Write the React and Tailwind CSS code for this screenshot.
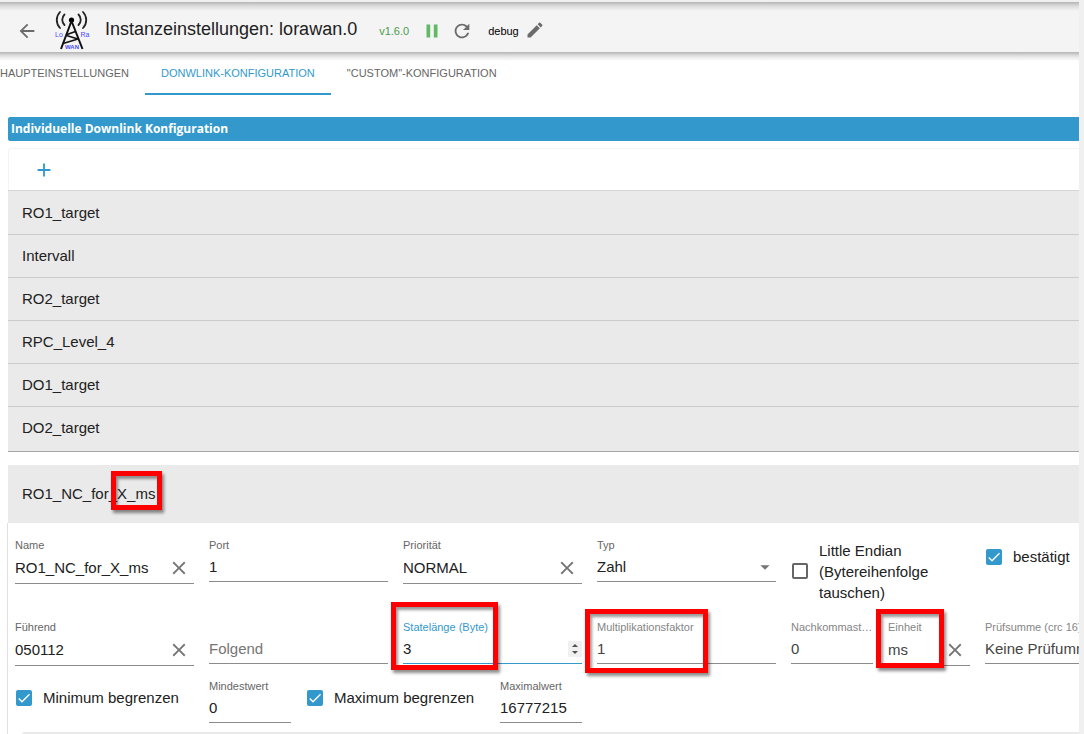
import React from "react";
import {
  MdAdd,
  MdArrowBack,
  MdArrowDropDown,
  MdCheck,
  MdClose,
  MdEdit,
  MdPause,
  MdRefresh,
} from "react-icons/md";

const entries = [
  "RO1_target",
  "Intervall",
  "RO2_target",
  "RPC_Level_4",
  "DO1_target",
  "DO2_target",
];

const tabs = [
  { name: "HAUPTEINSTELLUNGEN" },
  { name: "DONWLINK-KONFIGURATION", active: true },
  { name: "\"CUSTOM\"-KONFIGURATION" },
];

const Logo = () => (
  <svg viewBox="0 0 36 42" className="w-9 h-[42px] shrink-0" aria-label="LoRaWAN">
    <g fill="none" stroke="#222" strokeWidth="1.8" strokeLinecap="round">
      <path d="M10.500 5.500c-3 3-3 7.500 0 10.500M6 3c-4.300 4.500-4.300 11.500 0 16" />
      <path d="M24.500 5.500c3 3 3 7.500 0 10.500M29 3c4.300 4.500 4.300 11.500 0 16" />
    </g>
    <circle cx="17.500" cy="11" r="2.600" fill="#000" />
    <path d="M17.500 12L7 40M17.500 12L28.500 40" fill="none" stroke="#111" strokeWidth="2" />
    <path
      d="M13 25.500l8.500-3M12.500 26.500L24 30M24 30L9 34.500"
      fill="none"
      stroke="#111"
      strokeWidth="1.700"
    />
    <g fill="#4a4aff" fontFamily="Liberation Sans, sans-serif" fontSize="7">
      <text x="1" y="28">Lo</text>
      <text x="26.500" y="28">Ra</text>
      <text x="11" y="39.500" fontSize="6" fontWeight="bold">WAN</text>
    </g>
  </svg>
);

const Mark = ({ className }) => (
  <span
    className={`absolute border-5 border-[#fe0000] shadow-[2px_3px_3px_rgba(0,0,0,0.45),inset_2px_3px_3px_rgba(0,0,0,0.4)] pointer-events-none z-10 ${className}`}
  />
);

const Field = ({
  id,
  label,
  value,
  type = "text",
  span = "col-span-2",
  clear,
  options,
  focused,
  muted,
  placeholder,
  children,
}) => (
  <div className={`relative min-w-0 self-start ${span}`}>
    <label
      htmlFor={id}
      className={`block h-4 text-[11px] leading-4 truncate ${
        focused ? "text-[#3399cc]" : muted ? "text-[#858585]" : "text-[#666666]"
      }`}
    >
      {label}
    </label>
    <div
      className={`flex items-center border-b ${clear ? "h-[31px]" : "h-[29px]"} ${
        focused ? "border-[#3399cc]" : "border-[#8c8c8c]"
      }`}
    >
      {options ? (
        <>
          <select
            id={id}
            defaultValue={value}
            className={`appearance-none flex-1 min-w-0 outline-none ${muted ? "text-[#444]" : ""}`}
          >
            {options.map((item) => (
              <option key={item}>{item}</option>
            ))}
          </select>
          <MdArrowDropDown className="w-[22px] h-[22px] -ml-[22px] shrink-0 text-[#757575] pointer-events-none" />
        </>
      ) : (
        <input
          id={id}
          type={type}
          defaultValue={value}
          placeholder={placeholder}
          aria-label={placeholder}
          className={`flex-1 w-0 min-w-0 outline-none placeholder:text-[#757575] [appearance:textfield] [&::-webkit-inner-spin-button]:appearance-none ${
            muted ? "text-[#444]" : ""
          }`}
        />
      )}
      {clear && (
        <button type="button" aria-label="Löschen" className="shrink-0 px-1 text-[#757575]">
          <MdClose className="w-[22px] h-[22px]" />
        </button>
      )}
      {focused && (
        <span className="flex flex-col items-center justify-center gap-1 w-3.5 h-4 bg-[#f0f0f0]">
          <button
            type="button"
            aria-label="Erhöhen"
            className="border-x-3 border-b-3 border-x-transparent border-b-[#505050]"
          />
          <button
            type="button"
            aria-label="Verringern"
            className="border-x-3 border-t-3 border-x-transparent border-t-[#505050]"
          />
        </span>
      )}
    </div>
    {children}
  </div>
);

const Check = ({ checked, tall, children }) => (
  <label
    className={`col-span-2 flex items-center gap-[11px] pl-px self-start ${
      tall ? "h-[68px] mb-0.5" : "h-10"
    }`}
  >
    <span className="relative w-4 h-4 shrink-0">
      <input
        type="checkbox"
        defaultChecked={checked}
        className="peer appearance-none block w-4 h-4 rounded-xs border-2 border-[#666] checked:border-[#3399cc] checked:bg-[#3399cc]"
      />
      <MdCheck className="absolute inset-0 w-4 h-4 text-white hidden peer-checked:block pointer-events-none" />
    </span>
    <span className={tall ? "w-28 leading-[21px]" : ""}>{children}</span>
  </label>
);

const App = () => {
  return (
    <div className="min-h-screen bg-[#f0f0f0] pt-0.5 pr-[5px] font-['Liberation_Sans',Arial,sans-serif] text-[15px] text-[#212121] overflow-hidden">
      <header className="flex items-center h-[50px] pl-4 bg-[linear-gradient(to_bottom,#b5b5b5,#dcdcdc_4px,#f4f4f4_9px)]">
        <button type="button" aria-label="Zurück" className="mt-2 text-[#6b6b6b]">
          <MdArrowBack className="w-[22px] h-[22px]" />
        </button>
        <div className="ml-4 mt-1.5">
          <Logo />
        </div>
        <h1 className="ml-[15px] mt-1 text-[18px] leading-6">Instanzeinstellungen: lorawan.0</h1>
        <span className="ml-[22px] mt-2 text-[11px] text-[#4c9a50]">v1.6.0</span>
        <button type="button" aria-label="Pause" className="ml-3 mt-2 text-[#62b965]">
          <MdPause className="w-[22px] h-[22px]" />
        </button>
        <button type="button" aria-label="Neu starten" className="ml-2 mt-2 text-[#6b6b6b]">
          <MdRefresh className="w-[22px] h-[22px]" />
        </button>
        <span className="ml-[15px] mt-2 text-[11px] text-black">debug</span>
        <button type="button" aria-label="Bearbeiten" className="ml-1.5 mt-1.5 text-[#6b6b6b]">
          <MdEdit className="w-5 h-5" />
        </button>
      </header>

      <main className="bg-[linear-gradient(to_bottom,#b5b5b5,#e2e2e2_4px,#fff_9px)]">
        <nav className="flex -ml-4 h-[43px]">
          {tabs.map((tab) => (
            <button
              key={tab.name}
              type="button"
              className={`px-4 pt-0.5 text-[11px] border-b-2 whitespace-nowrap ${
                tab.active
                  ? "text-[#3399cc] border-[#3399cc]"
                  : "text-[#666666] border-transparent"
              }`}
            >
              {tab.name}
            </button>
          ))}
        </nav>

        <section className="pl-2 pt-[22px]">
          <h2 className="h-6 pl-[3px] rounded-l-xs bg-[#3399cc] font-['Open_Sans',sans-serif] text-[12px] leading-6 font-bold text-white">
            Individuelle Downlink Konfiguration
          </h2>

          <div className="mt-[7px] h-[42px] flex items-center pl-6 rounded-tl border-t border-l border-[#f3f3f3]">
            <button type="button" aria-label="Hinzufügen" className="text-[#3399cc]">
              <MdAdd className="w-[22px] h-[22px]" />
            </button>
          </div>

          <ul className="py-px bg-[#eaeaea] border-t border-b border-t-[#d5d5d5] border-b-[#a6a6a6]">
            {entries.map((item) => (
              <li
                key={item}
                className="h-[43px] flex items-center pl-3.5 border-b border-[#cbcbcb] last:border-transparent"
              >
                {item}
              </li>
            ))}
          </ul>

          <div className="relative mt-[13px] h-[58px] flex items-center pl-3.5 bg-[#eaeaea]">
            RO1_NC_for_X_ms
            <Mark className="left-[103px] top-1.5 w-[51px] h-[39px]" />
          </div>

          <form className="-ml-px overflow-hidden border-l border-[#e0e0e0]">
            <div className="grid grid-cols-[repeat(12,minmax(82px,1fr))] gap-x-[15px] gap-y-3 pt-3.5 pl-[7px]">
              <Field id="name" label="Name" value="RO1_NC_for_X_ms" clear />
              <Field id="port" label="Port" value="1" type="number" />
              <Field id="prio" label="Priorität" value="NORMAL" clear />
              <Field id="typ" label="Typ" value="Zahl" options={["Zahl"]} />
              <Check tall>Little Endian (Bytereihenfolge tauschen)</Check>
              <Check checked>bestätigt</Check>

              <Field id="front" label="Führend" value="050112" clear />
              <Field id="end" placeholder="Folgend" />
              <Field id="length" label="Statelänge (Byte)" value="3" type="number" focused>
                <Mark className="-left-3 -top-[17px] w-[107px] h-[68px]" />
              </Field>
              <Field id="factor" label="Multiplikationsfaktor" value="1" type="number" muted>
                <Mark className="-left-3 -top-2.5 w-[123px] h-16" />
              </Field>
              <Field
                id="decimals"
                label="Nachkommastellen"
                value="0"
                type="number"
                span="col-span-1"
                muted
              />
              <Field id="unit" label="Einheit" value="ms" span="col-span-1" clear muted>
                <Mark className="-left-3 -top-2.5 w-[68px] h-[59px]" />
              </Field>
              <Field
                id="crc"
                label="Prüfsumme (crc 16)"
                value="Keine Prüfumme"
                options={["Keine Prüfumme"]}
                muted
              />

              <Check checked>Minimum begrenzen</Check>
              <Field id="min" label="Mindestwert" value="0" type="number" span="col-span-1" />
              <Check checked>Maximum begrenzen</Check>
              <Field id="max" label="Maximalwert" value="16777215" type="number" span="col-span-1" />
            </div>
            <div className="mt-[9px] ml-3.5 h-0.5 rounded-tl bg-[#eaeaea]" />
          </form>
        </section>
      </main>
    </div>
  );
};

export default App;
